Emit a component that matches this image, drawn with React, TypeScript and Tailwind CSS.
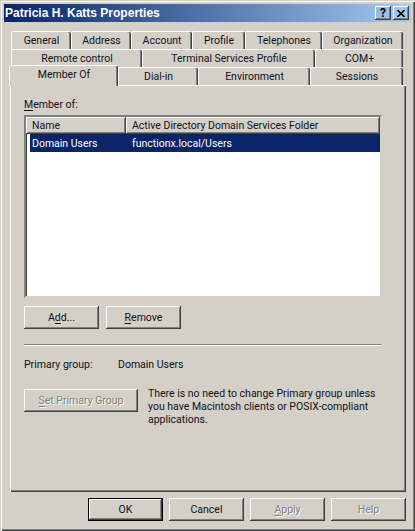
const btn = "shadow-[inset_-1px_-1px_0_#404040,inset_1px_1px_0_#ffffff,inset_-2px_-2px_0_#808080]";
const tabBase = "h-[18px] flex items-center justify-center rounded-t-[2px] border-l border-t border-white pt-[1px] shadow-[inset_-1px_0_0_#404040,inset_-2px_0_0_#808080]";

function Tab({ w, children }: { w: number; children: string }) {
  return <div className={tabBase} style={{ width: w }}>{children}</div>;
}

function U({ children }: { children: string }) {
  return <span className="underline underline-offset-2">{children}</span>;
}

function Button({ w, h = 23, disabled, def, children }: { w: number; h?: number; disabled?: boolean; def?: boolean; children: React.ReactNode }) {
  return (
    <div
      className={`flex items-center justify-center ${btn} ${def ? "border border-black" : ""} ${disabled ? "text-[#808080] [text-shadow:1px_1px_0_#ffffff]" : "text-[#101020]"}`}
      style={{ width: w, height: h }}
    >
      {children}
    </div>
  );
}

export default function App() {
  return (
    <div className="w-[415px] h-[531px] bg-[#d4d0c8] overflow-hidden font-['Roboto','Liberation_Sans',Arial,sans-serif] text-[10.5px] leading-[14px] text-[#101020] shadow-[inset_1px_1px_0_#d4d0c8,inset_2px_2px_0_#ffffff,inset_-1px_-1px_0_#404040,inset_-2px_-2px_0_#808080] pt-[4px] px-[4px]">
      <div className="w-[407px] h-[18px] flex items-center justify-between pl-[1px] pr-[2px] bg-gradient-to-r from-[#0a246a] to-[#a6caf0]">
        <span className="text-white font-bold font-['Liberation_Sans',Arial,sans-serif] text-[12px] leading-[16px]">Patricia H. Katts Properties</span>
        <div className="flex gap-[2px] text-black">
          <div className={`w-[16px] h-[14px] flex items-center justify-center font-bold text-[12px] ${btn}`}>?</div>
          <div className={`w-[16px] h-[14px] flex items-center justify-center ${btn}`}>
            <svg width="8" height="7" viewBox="0 0 8 7"><path d="M0.5 0 L7.5 7 M7.5 0 L0.5 7" stroke="#000" strokeWidth="1.6" /></svg>
          </div>
        </div>
      </div>

      <div className="ml-[7px] mt-[9px] w-[392px] flex">
        <Tab w={60}>General</Tab><Tab w={60}>Address</Tab><Tab w={61}>Account</Tab><Tab w={53}>Profile</Tab><Tab w={77}>Telephones</Tab><Tab w={81}>Organization</Tab>
      </div>
      <div className="ml-[7px] w-[392px] flex">
        <Tab w={131}>Remote control</Tab><Tab w={173}>Terminal Services Profile</Tab><Tab w={88}>COM+</Tab>
      </div>
      <div className="ml-[5px] w-[394px] h-[18px] flex items-end">
        <div className="relative z-10 w-[109px] h-[21px] -mb-[1px] bg-[#d4d0c8] rounded-t-[2px] border-l border-t border-white flex items-center justify-center pb-[3px] shadow-[inset_-1px_0_0_#404040,inset_-2px_0_0_#808080]">
          Member Of
        </div>
        <Tab w={80}>Dial-in</Tab><Tab w={112}>Environment</Tab><Tab w={93}>Sessions</Tab>
      </div>

      <div className="ml-[6px] w-[396px] h-[407px] border-l border-t border-white shadow-[inset_-1px_-1px_0_#404040,inset_-2px_-2px_0_#808080] px-[13px] pt-[12px]">
        <div className="h-[16px]"><U>M</U>ember of:</div>
        <div className="mt-[1px] w-[358px] h-[183px] bg-white border-2 border-t-[#808080] border-l-[#808080] border-b-[#d4d0c8] border-r-[#d4d0c8] shadow-[inset_1px_1px_0_#404040]">
          <div className="flex h-[17px]">
            <div className={`w-[100px] flex items-center pl-[6px] pt-[1px] bg-[#d4d0c8] ${btn}`}>Name</div>
            <div className={`flex-1 flex items-center pl-[6px] pt-[1px] bg-[#d4d0c8] ${btn}`}>Active Directory Domain Services Folder</div>
          </div>
          <div className="ml-[4px] h-[18px] bg-[#0a246a] text-white flex items-center pl-[2px] pt-[1px]">
            <span className="w-[100px]">Domain Users</span>
            <span>functionx.local/Users</span>
          </div>
        </div>

        <div className="mt-[8px] flex gap-[7px]">
          <Button w={75}><span>A<U>d</U>d...</span></Button>
          <Button w={75}><span><U>R</U>emove</span></Button>
        </div>

        <div className="mt-[15px] w-[357px] h-[2px] border-t border-b border-t-[#808080] border-b-white" />

        <div className="mt-[12px] flex">
          <span className="w-[94px]">Primary group:</span>
          <span>Domain Users</span>
        </div>

        <div className="mt-[17px] flex gap-[10px]">
          <Button w={114} disabled><span><U>S</U>et Primary Group</span></Button>
          <div className="w-[240px] -mt-[2px] leading-[13px] whitespace-nowrap">
            There is no need to change Primary group unless<br />you have Macintosh clients or POSIX-compliant<br />applications.
          </div>
        </div>
      </div>

      <div className="mt-[6px] ml-[84px] flex gap-[6px]">
        <Button w={75} def>OK</Button>
        <Button w={75}>Cancel</Button>
        <Button w={75} disabled><span><U>A</U>pply</span></Button>
        <Button w={75} disabled>Help</Button>
      </div>
    </div>
  );
}
